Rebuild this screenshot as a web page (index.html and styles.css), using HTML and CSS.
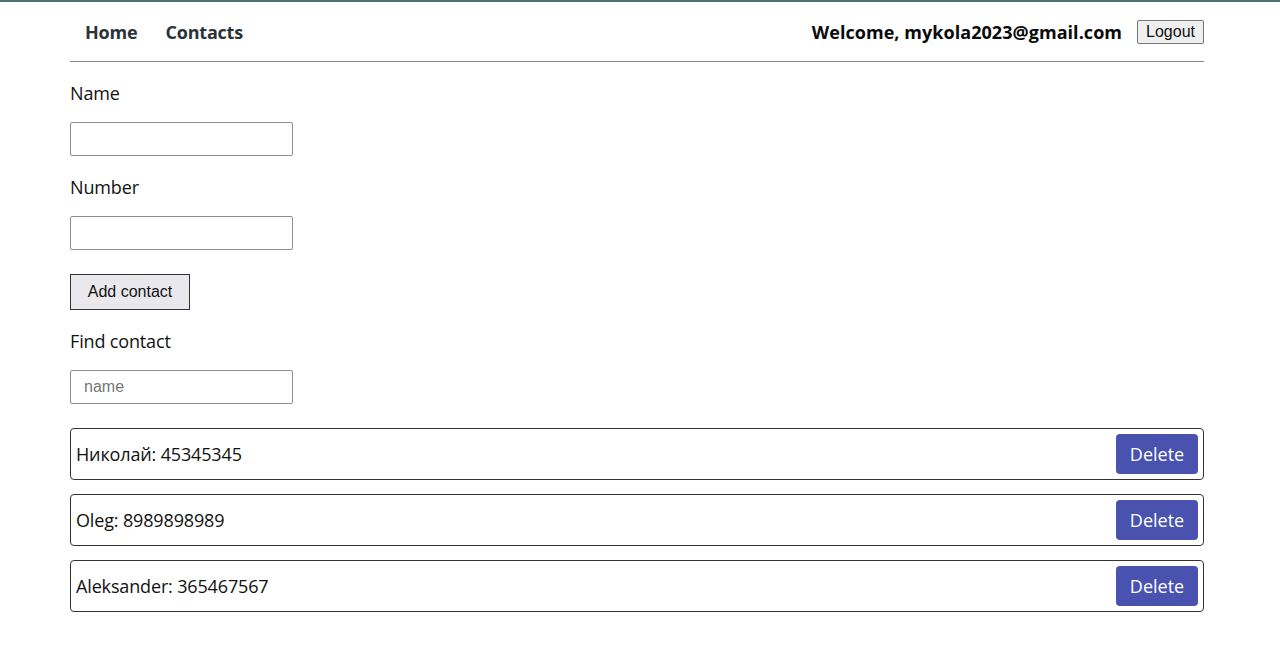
FILE: index.html
```html
<!DOCTYPE html>
<html lang="en">
<head>
<meta charset="utf-8">
<title>Phonebook</title>
<link rel="stylesheet" href="styles.css">
</head>
<body>
<div class="container">
  <header class="header">
    <nav class="nav">
      <a class="nav-link" href="#">Home</a>
      <a class="nav-link" href="#">Contacts</a>
    </nav>
    <div class="user-menu">
      <span class="welcome">Welcome, mykola2023@gmail.com</span>
      <button class="logout" type="button">Logout</button>
    </div>
  </header>
  <form class="form">
    <label class="label" for="name">Name</label>
    <input class="input" id="name" type="text">
    <label class="label" for="number">Number</label>
    <input class="input" id="number" type="tel">
    <button class="add-btn" type="button">Add contact</button>
  </form>
  <div class="filter">
    <label class="label" for="find">Find contact</label>
    <input class="input" id="find" type="text" placeholder="name">
  </div>
  <ul class="list">
    <li class="item"><span class="item-text">Николай: 45345345</span><button class="delete" type="button">Delete</button></li>
    <li class="item"><span class="item-text">Oleg: 8989898989</span><button class="delete" type="button">Delete</button></li>
    <li class="item"><span class="item-text">Aleksander: 365467567</span><button class="delete" type="button">Delete</button></li>
  </ul>
</div>
</body>
</html>
```
FILE: styles.css
```css
html, body {
  margin: 0;
  padding: 0;
  background: #fff;
}
body {
  border-top: 2px solid #4d7275;
  font-family: "Open Sans", "Noto Sans", sans-serif;
  color: #111;
}
.container {
  width: 1134px;
  margin-left: 70px;
}
.header {
  height: 59px;
  display: flex;
  align-items: center;
  justify-content: space-between;
  border-bottom: 1px solid #8a8a8a;
}
.nav {
  display: flex;
  gap: 28px;
  padding-left: 15px;
}
.nav-link {
  font-size: 18px;
  font-weight: 700;
  letter-spacing: -0.2px;
  color: #2a3338;
  text-decoration: none;
}
.user-menu {
  display: flex;
  align-items: center;
  gap: 15px;
}
.welcome {
  font-size: 18px;
  font-weight: 700;
  letter-spacing: 0.05px;
  color: #0a0a0a;
}
.logout {
  font-family: "Liberation Sans", Arial, sans-serif;
  font-size: 16px;
  height: 24px;
  padding: 0 8px;
  background: #efefef;
  border: 1px solid #767676;
  border-radius: 2px;
  color: #111;
}
.form, .filter {
  display: flex;
  flex-direction: column;
  align-items: flex-start;
}
.label {
  font-size: 18px;
  line-height: 24px;
  letter-spacing: -0.15px;
  margin-top: 19px;
  margin-bottom: 17px;
}
.input {
  box-sizing: border-box;
  width: 223px;
  height: 34px;
  border: 1px solid #8d8d8d;
  border-radius: 2px;
  padding: 0 13px;
  font-family: "Liberation Sans", Arial, sans-serif;
  font-size: 16px;
  margin: 0;
}
.input::placeholder {
  color: #777;
}
.add-btn {
  box-sizing: border-box;
  margin-top: 24px;
  width: 120px;
  height: 36px;
  background: #e9e9ed;
  border: 1px solid #333;
  border-radius: 0;
  font-family: "Liberation Sans", Arial, sans-serif;
  font-size: 16px;
  color: #111;
}
.list {
  list-style: none;
  margin: 24px 0 0;
  padding: 0;
  display: flex;
  flex-direction: column;
  gap: 14px;
}
.item {
  box-sizing: border-box;
  height: 52px;
  display: flex;
  align-items: center;
  justify-content: space-between;
  border: 1px solid #333;
  border-radius: 4px;
  padding: 0 5px;
}
.item-text {
  font-size: 18px;
  letter-spacing: -0.15px;
}
.delete {
  box-sizing: border-box;
  width: 82px;
  height: 40px;
  background: #4a52b0;
  border: none;
  border-radius: 4px;
  color: #fff;
  font-family: "Open Sans", "Noto Sans", sans-serif;
  font-size: 18px;
}
```
